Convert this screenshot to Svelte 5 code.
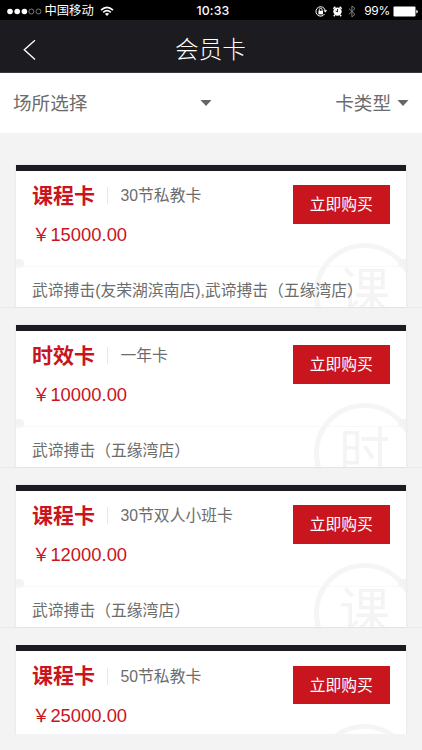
<script>
  const cards = [
    { kind: '课程卡', name: '30节私教卡', price: '15000.00', venue: '武谛搏击(友荣湖滨南店),武谛搏击（五缘湾店）' },
    { kind: '时效卡', name: '一年卡', price: '10000.00', venue: '武谛搏击（五缘湾店）' },
    { kind: '课程卡', name: '30节双人小班卡', price: '12000.00', venue: '武谛搏击（五缘湾店）' },
    { kind: '课程卡', name: '50节私教卡', price: '25000.00', venue: '' }
  ];
</script>

<div class="app">
  <div class="status">
    <div class="left">
      <svg width="35" height="20" viewBox="0 0 35 20">
        <g fill="#fff"><circle cx="3" cy="10.5" r="2.8" /><circle cx="10.2" cy="10.5" r="2.8" /><circle cx="17.4" cy="10.5" r="2.8" /></g>
        <g fill="none" stroke="#aaa" stroke-width=".7"><circle cx="24.4" cy="10.5" r="2.5" /><circle cx="31.5" cy="10.5" r="2.5" /></g>
      </svg>
      <span class="carrier">中国移动</span>
      <svg class="wifi" width="14" height="20" viewBox="0 0 14 20" fill="none" stroke="#fff" stroke-width="1.6">
        <path d="M1 9.1Q7 3.6 13 9.1M3.2 11.4Q7 8 10.8 11.4" />
        <path d="M4.9 12.8Q7 11.2 9.1 12.8L7 15Z" fill="#fff" stroke="none" />
      </svg>
    </div>
    <span class="time">10:33</span>
    <div class="right">
      <svg width="44" height="20" viewBox="0 0 44 20" fill="none" stroke="#fff">
        <path d="M9.6 13A4.7 4.7 0 1 1 10.2 9.3" />
        <path d="M8.4 9.2h3.8l-1.9 2.4z" fill="#fff" stroke="none" />
        <path d="M3.4 9.8h4.6v3.6H3.4z" fill="#fff" stroke="none" />
        <path d="M4.3 10V8.7a1.4 1.4 0 0 1 2.8 0V10" stroke-width=".9" />
        <circle cx="22.5" cy="10.6" r="4.2" fill="#fff" stroke="none" />
        <path d="M18.3 7.8l2.1-2M26.7 7.8l-2.1-2M19.8 14l-1 1.2M25.2 14l1 1.2" stroke-width="1.5" />
        <path d="M22.6 8v2.8l-2-.8" stroke="#000" stroke-width=".9" />
        <path d="M34 7.7l6 5.6-3.1 2.6V5l3.1 2.6-6 5.7" stroke="#8a8a8a" stroke-width=".9" />
      </svg>
      <span class="percent">99%</span>
      <svg width="26" height="20" viewBox="0 0 26 20">
        <rect x=".5" y="5.5" width="22" height="10" rx="1" fill="#fff" />
        <path d="M23.3 8.7q1.5.3 1.5 1.9t-1.5 1.9z" fill="#fff" />
      </svg>
    </div>
  </div>

  <header>
    <svg class="back" width="14" height="22" viewBox="0 0 14 22" fill="none" stroke="#fff" stroke-width="1.4"><path d="M12 1.2L1.3 10.7 12 20.4" /></svg>
    <h1>会员卡</h1>
  </header>

  <nav>
    <div class="filter place"><span>场所选择</span><svg width="12" height="6" viewBox="0 0 12 6"><path d="M.5 0h11L6 6z" fill="#666" /></svg></div>
    <div class="filter type"><span>卡类型</span><svg width="12" height="6" viewBox="0 0 12 6"><path d="M.5 0h11L6 6z" fill="#666" /></svg></div>
  </nav>

  <main>
    {#each cards as card}
      <section class="slot">
        <article class="card">
          <div class="seal">{card.kind[0]}</div>
          <i class="notch l"></i><i class="notch r"></i>
          <div class="offer">
            <div class="info">
              <div class="heading"><strong>{card.kind}</strong><span class="name">{card.name}</span></div>
              <div class="price">￥{card.price}</div>
            </div>
            <button>立即购买</button>
          </div>
          <div class="venue">{card.venue}</div>
        </article>
      </section>
    {/each}
  </main>
</div>

<style>
  :global(body) { margin: 0; }
  .app {
    width: 422px; height: 750px; overflow: hidden;
    display: flex; flex-direction: column;
    background: #f3f3f3; color: #6c6c6c;
    font-family: "Liberation Sans", "Noto Sans CJK SC", sans-serif;
    font-weight: 400;
  }
  .status {
    flex: none; height: 20px; box-sizing: border-box; padding: 0 3px 0 7px;
    display: grid; grid-template-columns: 1fr auto 1fr; align-items: center;
    background: #000; color: #fff; line-height: 20px;
  }
  .left, .right { display: flex; align-items: center; height: 20px; }
  .right { justify-content: flex-end; }
  .status svg { display: block; flex: none; }
  .carrier { font-size: 12.3px; margin-left: 2.5px; padding-top: 1px; }
  .wifi { margin-left: 6px; }
  .time { font: 500 12.3px/21px Inter, sans-serif; letter-spacing: .15px; }
  .percent { font: 400 12px/21px Inter, sans-serif; margin: 0 3px 0 5px; letter-spacing: -.3px; }
  header {
    flex: none; height: 53px; box-sizing: border-box; border-bottom: 1px solid #38383c;
    padding: 0 23px; display: grid; grid-template-columns: 14px 1fr 14px; align-items: center;
    background: #1b1b20; color: #fff;
  }
  .back { margin-top: 8px; }
  h1 { margin: 8px 0 0 -1px; text-align: center; font-size: 23.6px; font-weight: 300; line-height: 34px; }
  nav {
    flex: none; height: 59.5px; box-sizing: border-box; padding: 1px 13px 0;
    display: flex; justify-content: space-between; align-items: center; background: #fff;
  }
  .filter { display: flex; align-items: center; justify-content: space-between; font-size: 18.6px; line-height: 28px; }
  .filter span { padding-top: 1px; }
  .place { width: 199px; }
  .type { gap: 6px; }
  main { flex: none; height: 601.5px; box-sizing: border-box; overflow: hidden; padding-top: 32px; height: 617.5px; }
  .slot { height: 143px; margin-bottom: 17.2px; box-sizing: border-box; border-bottom: 1px solid #e9e9e9; padding: 0 16px; }
  .card {
    position: relative; height: 142px; box-sizing: border-box; overflow: hidden;
    border-top: 6px solid #1b1b20; background: #fff; box-shadow: 0 0 2px #ddd;
  }
  .offer { position: relative; height: 96px; box-sizing: border-box; border-bottom: 1px solid #f8f8f8; padding: 0 16px; display: flex; justify-content: space-between; }
  .heading { display: flex; align-items: center; padding-top: 8px; height: 34px; }
  strong { font-size: 21px; font-weight: 700; color: #c9151e; line-height: 34px; }
  .name { font-size: 15.8px; line-height: 17px; margin-left: 12px; padding-left: 12.5px; border-left: 1px solid #e8e8e8; white-space: nowrap; }
  .price { font-size: 18.4px; line-height: 26px; color: #c9151e; margin-top: 9.5px; }
  button {
    flex: none; width: 97.5px; height: 38.5px; margin: 14.5px 0 0; padding: 1px 0 0; border: 0;
    background: #c9151e; color: #fff; font: inherit; font-size: 15.8px; line-height: 38px;
  }
  .venue { position: relative; padding: 11px 16px 0; font-size: 15.8px; line-height: 26px; white-space: nowrap; }
  .seal {
    position: absolute; left: 298px; top: 72.5px; width: 101px; height: 101px; box-sizing: border-box;
    border: 5px solid #f5f5f5; border-radius: 50%; color: #f4f4f4;
    font-size: 51px; line-height: 90px; text-align: center;
  }
  .notch { position: absolute; top: 88px; width: 9px; height: 9px; background: #f3f3f3; }
  .notch.l { left: -1px; border-radius: 0 5px 5px 0; }
  .notch.r { right: -1px; border-radius: 5px 0 0 5px; }
  .slot:last-child { height: 89px; border: 0; overflow: hidden; margin: 0; }
</style>
